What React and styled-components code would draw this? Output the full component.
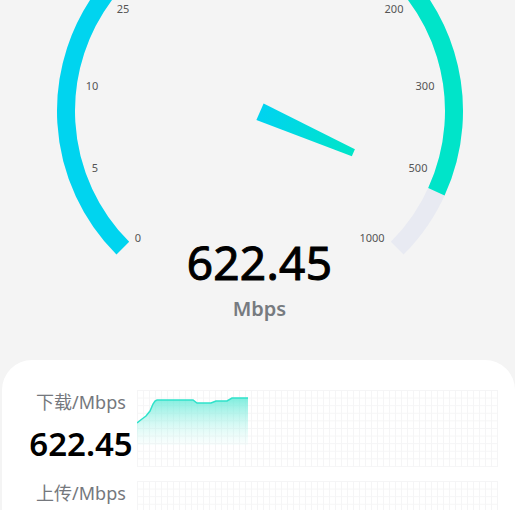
import React from "react";
import styled, { createGlobalStyle } from "styled-components";

const GlobalStyle = createGlobalStyle`
  html, body {
    margin: 0;
    padding: 0;
    height: 510px;
    overflow: hidden;
    background: #f4f4f4;
    font-family: "Noto Sans", "Noto Sans CJK SC", sans-serif;
  }
`;

const CX = 260;
const CY = 111;
const R = 194;
const START = 135;
const STEP = 27;

// labels sit just inside the arc; the upper ones fall outside the view
const ticks = [
  { text: "0", x: 138, y: 237 },
  { text: "5", x: 95, y: 167 },
  { text: "10", x: 92, y: 85 },
  { text: "25", x: 123, y: 8 },
  { text: "200", x: 394, y: 8 },
  { text: "300", x: 425, y: 85 },
  { text: "500", x: 418, y: 167 },
  { text: "1000", x: 372, y: 237 },
];

const speed = 622.45;

const polar = (deg, r) => {
  const a = (deg * Math.PI) / 180;
  return [CX + r * Math.cos(a), CY + r * Math.sin(a)];
};

const arc = (from, to, r) => {
  const [x1, y1] = polar(from, r);
  const [x2, y2] = polar(to, r);
  const large = to - from > 180 ? 1 : 0;
  return `M ${x1} ${y1} A ${r} ${r} 0 ${large} 1 ${x2} ${y2}`;
};

// 500 sits at tick 9, 1000 at tick 10
const valueAngle = START + STEP * (9 + (speed - 500) / 500);

const Page = styled.div`
  width: 515px;
`;

const GaugeSection = styled.section`
  display: flex;
  flex-direction: column;
  align-items: center;
`;

const GaugeSvg = styled.svg`
  display: block;
  width: 515px;
  height: 232px;
  overflow: visible;
`;

const TickLabel = styled.text`
  font-size: 11px;
  fill: #555;
`;

const BigValue = styled.div`
  position: relative;
  left: 2px;
  font-size: 46px;
  line-height: 60px;
  font-weight: 400;
  -webkit-text-stroke: 1px #000;
  color: #000;
  letter-spacing: 0.3px;
`;

const Unit = styled.div`
  position: relative;
  left: 2px;
  margin-top: 5px;
  font-size: 20px;
  line-height: 24px;
  font-weight: 600;
  color: #777b80;
`;

const Card = styled.div`
  margin: 39px 0 0 2px;
  padding: 30px 17px 0 25px;
  background: #fff;
  border-radius: 30px 30px 0 0;
  display: flex;
  flex-direction: column;
  gap: 14px;
`;

const MetricRow = styled.div`
  display: grid;
  grid-template-columns: 108px 1fr;
  column-gap: 2px;
`;

const MetricText = styled.div`
  display: flex;
  flex-direction: column;
  align-items: center;
`;

const Label = styled.div`
  font-size: 18px;
  line-height: 24px;
  color: #75787d;
`;

const Value = styled.div`
  margin-top: 10px;
  font-size: 33px;
  line-height: 40px;
  font-weight: 600;
  color: #000;
`;

const Chart = styled.div`
  height: 77px;
  background-color: #fff;
  background-image: linear-gradient(to right, #f5f5f6 1px, transparent 1px),
    linear-gradient(to bottom, #f5f5f6 1px, transparent 1px);
  background-size: 6px 7.6px;
`;

const downloadPoints = [
  [0, 33], [5, 29], [9, 26], [13, 21], [16, 14], [18, 11], [20, 10],
  [56, 10], [60, 13], [74, 13], [79, 11], [90, 11], [95, 8], [111, 8],
];

const AreaChart = ({ points }) => {
  const line = points.map(([x, y], i) => `${i ? "L" : "M"} ${x} ${y}`).join(" ");
  const last = points[points.length - 1][0];
  const area = `${line} L ${last} 55 L 0 55 Z`;
  return (
    <svg width="100%" height="77" style={{ display: "block" }}>
      <defs>
        <linearGradient id="areaFill" x1="0" y1="0" x2="0" y2="1">
          <stop offset="0" stopColor="#5fe9d6" stopOpacity="0.8" />
          <stop offset="1" stopColor="#c8f7f0" stopOpacity="0.1" />
        </linearGradient>
      </defs>
      <path d={area} fill="url(#areaFill)" />
      <path d={line} fill="none" stroke="#2fe2ca" strokeWidth="1.5" />
    </svg>
  );
};

const Needle = () => {
  const a = ((valueAngle - 0.9) * Math.PI) / 180;
  const len = 102;
  const nx = -Math.sin(a);
  const ny = Math.cos(a);
  const b = [CX, CY + 0.7];
  const tip = [CX + len * Math.cos(a), CY + 0.7 + len * Math.sin(a)];
  const pts = [
    [b[0] + 9 * nx, b[1] + 9 * ny],
    [b[0] - 9 * nx, b[1] - 9 * ny],
    [tip[0] - 3.8 * nx, tip[1] - 3.8 * ny],
    [tip[0] + 3.8 * nx, tip[1] + 3.8 * ny],
  ];
  return (
    <>
      <defs>
        <linearGradient id="needleFill" gradientUnits="userSpaceOnUse" x1={b[0]} y1={b[1]} x2={tip[0]} y2={tip[1]}>
          <stop offset="0" stopColor="#00d3f0" />
          <stop offset="1" stopColor="#00e5c8" />
        </linearGradient>
      </defs>
      <polygon points={pts.map((p) => p.join(",")).join(" ")} fill="url(#needleFill)" />
    </>
  );
};

const Gauge = () => (
  <GaugeSvg viewBox="0 0 515 232">
    <defs>
      <linearGradient id="arcFill" gradientUnits="userSpaceOnUse" x1="60" y1="0" x2="460" y2="0">
        <stop offset="0.3" stopColor="#00d4ef" />
        <stop offset="0.75" stopColor="#00e4c9" />
      </linearGradient>
    </defs>
    <path d={arc(START, START + 270, R)} fill="none" stroke="#e8eaf2" strokeWidth="18" />
    <path d={arc(START, valueAngle, R)} fill="none" stroke="url(#arcFill)" strokeWidth="18" />
    {ticks.map((t) => (
      <TickLabel key={t.text} x={t.x} y={t.y} textAnchor="middle" dominantBaseline="central">
        {t.text}
      </TickLabel>
    ))}
    <Needle />
  </GaugeSvg>
);

const App = () => (
  <Page>
    <GlobalStyle />
    <GaugeSection>
      <Gauge />
      <BigValue>622.45</BigValue>
      <Unit>Mbps</Unit>
    </GaugeSection>
    <Card>
      <MetricRow>
        <MetricText>
          <Label>下载/Mbps</Label>
          <Value>622.45</Value>
        </MetricText>
        <Chart>
          <AreaChart points={downloadPoints} />
        </Chart>
      </MetricRow>
      <MetricRow>
        <MetricText>
          <Label>上传/Mbps</Label>
        </MetricText>
        <Chart />
      </MetricRow>
    </Card>
  </Page>
);

export default App;
